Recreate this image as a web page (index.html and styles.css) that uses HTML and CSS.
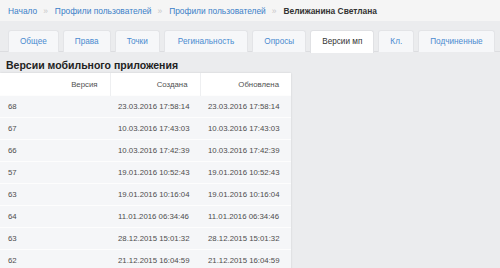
FILE: index.html
```html
<!DOCTYPE html>
<html lang="ru">
<head>
<meta charset="utf-8">
<link rel="stylesheet" href="styles.css">
</head>
<body>
<div class="breadcrumb">
  <a href="#">Начало</a><span class="sep">»</span><a href="#">Профили пользователей</a><span class="sep">»</span><a href="#">Профили пользователей</a><span class="sep">»</span><span class="current">Велижанина Светлана</span>
</div>
<div class="tabs">
  <a class="tab" href="#">Общее</a>
  <a class="tab" href="#">Права</a>
  <a class="tab" href="#">Точки</a>
  <a class="tab wide" href="#">Регинальность</a>
  <a class="tab" href="#">Опросы</a>
  <a class="tab active" href="#">Версии мп</a>
  <a class="tab" href="#">Кл.</a>
  <a class="tab" href="#">Подчиненные</a>
</div>
<h2 class="title">Версии мобильного приложения</h2>
<table class="grid">
  <colgroup><col class="c1"><col class="c2"><col class="c3"></colgroup>
  <thead>
    <tr><th>Версия</th><th>Создана</th><th>Обновлена</th></tr>
  </thead>
  <tbody>
    <tr><td>68</td><td>23.03.2016 17:58:14</td><td>23.03.2016 17:58:14</td></tr>
    <tr><td>67</td><td>10.03.2016 17:43:03</td><td>10.03.2016 17:43:03</td></tr>
    <tr><td>66</td><td>10.03.2016 17:42:39</td><td>10.03.2016 17:42:39</td></tr>
    <tr><td>57</td><td>19.01.2016 10:52:43</td><td>19.01.2016 10:52:43</td></tr>
    <tr><td>63</td><td>19.01.2016 10:16:04</td><td>19.01.2016 10:16:04</td></tr>
    <tr><td>64</td><td>11.01.2016 06:34:46</td><td>11.01.2016 06:34:46</td></tr>
    <tr><td>63</td><td>28.12.2015 15:01:32</td><td>28.12.2015 15:01:32</td></tr>
    <tr><td>62</td><td>21.12.2015 16:04:59</td><td>21.12.2015 16:04:59</td></tr>
  </tbody>
</table>
</body>
</html>
```
FILE: styles.css
```css
html, body {
  margin: 0;
  padding: 0;
}
body {
  background: #ebecee;
  font-family: "Liberation Sans", Arial, sans-serif;
  font-size: 9px;
  color: #333;
  height: 268px;
  overflow: hidden;
}
a {
  text-decoration: none;
}
.breadcrumb {
  background: #f5f5f5;
  height: 21px;
  line-height: 22px;
  padding: 0 8px;
  font-size: 8.4px;
  white-space: nowrap;
}
.breadcrumb a {
  color: #3b80c8;
}
.breadcrumb .sep {
  color: #c8c8c8;
  margin: 0 7px 0 6px;
}
.breadcrumb .current {
  font-weight: bold;
  color: #333;
}
.tabs {
  display: flex;
  gap: 4px;
  padding: 9px 0 0 8px;
  border-bottom: 1px solid #dcdde0;
  height: 21px;
}
.tab {
  display: block;
  height: 21px;
  line-height: 22px;
  padding: 0 11px;
  background: #f6f7f9;
  border: 1px solid #e3e4e7;
  border-bottom: none;
  border-radius: 3px 3px 0 0;
  color: #4a8bd0;
  font-size: 8.2px;
  text-align: center;
  white-space: nowrap;
}
.tab.wide {
  padding: 0 13px;
}
.tab.active {
  background: #fff;
  color: #333;
  height: 22px;
  border-color: #e0e1e4;
}
.title {
  margin: 0;
  padding: 5px 0 0 6px;
  height: 16px;
  font-size: 10.5px;
  font-weight: bold;
  line-height: 16px;
  color: #222;
}
.grid {
  border-collapse: collapse;
  table-layout: fixed;
  width: 291px;
  background: #f5f6f8;
  box-shadow: 0 0 2px rgba(0,0,0,0.12);
  font-size: 7.8px;
}
.grid .c1 { width: 110px; }
.grid .c2 { width: 90px; }
.grid .c3 { width: 91px; }
.grid th {
  background: #fff;
  font-weight: normal;
  color: #505050;
  text-align: right;
  height: 22px;
  padding: 0 12px 0 8px;
  border-left: 1px solid #eeeff1;
}
.grid th:first-child {
  border-left: none;
}
.grid td {
  height: 21px;
  padding: 0 12px 0 8px;
  text-align: right;
  color: #4d4d4d;
  border-top: 1px solid #fdfdfd;
  white-space: nowrap;
}
.grid td:first-child {
  text-align: left;
}
```
